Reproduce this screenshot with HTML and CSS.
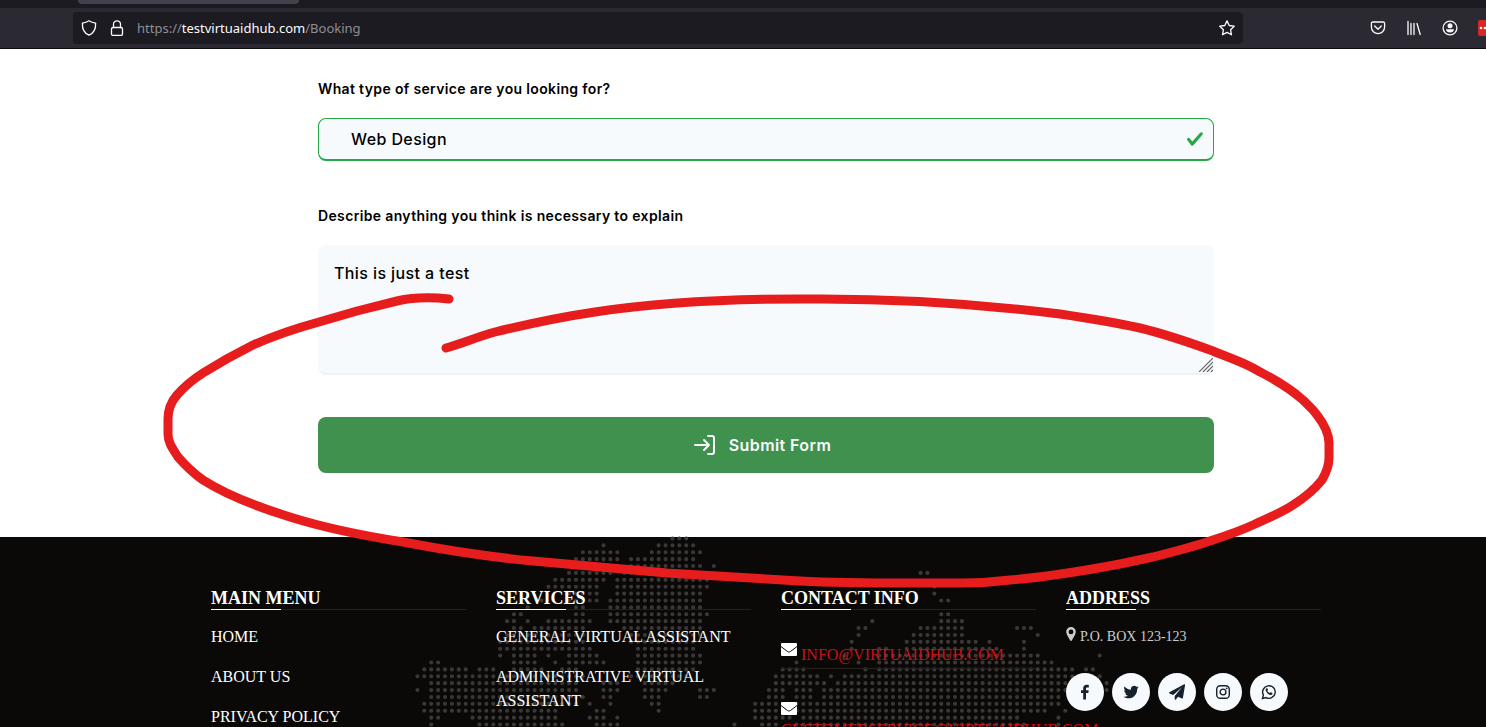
FILE: index.html
```html
<!DOCTYPE html>
<html lang="en">
<head>
<meta charset="utf-8">
<meta name="viewport" content="width=device-width, initial-scale=1">
<title>Booking</title>
<link rel="stylesheet" href="styles.css">
</head>
<body>
<header class="browser">
  <div class="tabstrip"><div class="tab"></div></div>
  <div class="toolbar">
    <div class="urlbar">
      <svg class="icon" viewBox="0 0 16 16" aria-hidden="true"><path d="M8 .8c2 1.300 4 2 6.600 2.400.3 5.600-1.600 9.800-6.600 12-5-2.200-6.900-6.400-6.600-12C4 2.800 6 2.100 8 .8z"/></svg>
      <svg class="icon" viewBox="0 0 16 16" aria-hidden="true"><rect x="2.500" y="7.500" width="11" height="8" rx="1.500"/><path d="M4.500 7.500V4.300a3.500 3.500 0 0 1 7 0v3.200"/></svg>
      <a class="url" href="#">https://<span class="host">testvirtuaidhub.com</span>/Booking</a>
      <button class="tool" type="button" aria-label="Bookmark"><svg class="icon" viewBox="0 0 16 16"><path d="M8 .9l2.200 4.600 5 .7-3.600 3.600.9 5L8 12.400l-4.500 2.400.9-5L.8 6.200l5-.7z"/></svg></button>
    </div>
    <div class="tools">
      <button class="tool" type="button" aria-label="Pocket"><svg class="icon" viewBox="0 0 16 16"><path d="M2.700 2h10.600c.8 0 1.300.5 1.300 1.300V7c0 4-3 6.600-6.600 6.600S1.400 11 1.400 7V3.300C1.400 2.500 1.900 2 2.700 2zM4.700 6L8 9.200 11.300 6"/></svg></button>
      <button class="tool" type="button" aria-label="Library"><svg class="icon" viewBox="0 0 16 16"><path d="M2 1.500v13M5 3.500v11M8 3.500v11M11 3.500l3.200 11"/></svg></button>
      <button class="tool" type="button" aria-label="Account"><svg class="icon" viewBox="0 0 16 16"><circle cx="8" cy="8" r="6.900"/><circle class="solid" cx="8" cy="5.800" r="2.500"/><path class="solid" d="M4 9.300h8c0 2-2 3.300-4 3.300s-4-1.300-4-3.300z"/></svg></button>
      <button class="extension" type="button" aria-label="Extension"><svg viewBox="0 0 16 16"><circle cx="3" cy="8" r="1.300"/><circle cx="7" cy="8" r="1.300"/><circle cx="11" cy="8" r="1.300"/></svg></button>
    </div>
  </div>
</header>

<main>
  <form class="form">
    <label for="service">What type of service are you looking for?</label>
    <div class="select-wrap">
      <select id="service" class="field select"><option>Web Design</option></select>
      <svg class="check" viewBox="0 0 8 8" aria-hidden="true"><path d="M2.300 6.730L.6 4.530c-.4-1.040.46-1.400 1.100-.8l1.100 1.400 3.400-3.800c.6-.63 1.600-.27 1.200.7l-4 4.600c-.43.5-.8.4-1.100.1z"/></svg>
    </div>
    <label for="details">Describe anything you think is necessary to explain</label>
    <div class="area-wrap">
      <textarea id="details" class="field area">This is just a test</textarea>
      <svg class="grip" viewBox="0 0 14 14" aria-hidden="true"><path d="M0 14L14 0M4 14L14 4M8 14l6-6M12 14l2-2"/></svg>
    </div>
    <button class="submit" type="submit">
      <svg viewBox="0 0 24 24" aria-hidden="true"><path d="M2 12h14M11 7l5 5-5 5M15 3h4a2 2 0 0 1 2 2v14a2 2 0 0 1-2 2h-4"/></svg>
      Submit Form
    </button>
  </form>
</main>

<footer class="footer">
  <svg class="map" viewBox="0 0 102 28" aria-hidden="true"><path transform="translate(.5 .5)" d="M37 0h2.100M27 1h.1M35 1h5.100M24 2h5.100M34 2h7.100M23 3h6.100M31 3h9.100M31 4h10.100M43 4h.1M22 5h6.100M30 5h11.100M73 5h1.100M20 6h7.100M29 6h13.100M19 7h7.100M29 7h13.100M75 7h.1M22 8h4.100M29 8h12.100M75 8h.1M18 9h.1M22 9h4.100M28 9h13.100M76 9h1.100M16 10h.1M23 10h1.100M28 10h13.100M14 11h1.100M23 11h1.100M28 11h14.100M76 11h1.100M13 12h1.100M16 12h.1M19 12h6.100M28 12h13.100M66 12h.1M76 12h3.100M14 13h1.100M17 13h7.100M30 13h11.100M64 13h1.100M73 13h6.100M87 13h2.100M13 14h11.100M31 14h10.100M64 14h.1M72 14h7.100M90 14h.1M12 15h12.100M31 15h9.100M63 15h.1M71 15h10.100M83 15h.1M88 15h.1M12 16h13.100M32 16h8.100M63 16h.1M67 16h1.100M71 16h13.100M88 16h.1M12 17h.1M14 17h3.100M19 17h.1M22 17h4.100M32 17h9.100M62 17h.1M67 17h23.100M99 17h.1M2 18h1.100M14 18h3.100M20 18h.1M22 18h5.100M32 18h9.100M55 18h.1M64 18h.1M67 18h25.100M1 19h6.100M9 19h2.100M14 19h4.100M21 19h2.100M32 19h8.100M53 19h3.100M65 19h.1M67 19h28.100M97 19h1.100M0 20h.1M1 20h23.100M31 20h8.100M52 20h6.100M60 20h.1M62 20h35.100M99 20h.1M2 21h21.100M27 21h2.100M33 21h4.100M52 21h7.100M61 21h37.100M100 21h.1M0 22h.1M2 22h21.100M27 22h2.100M33 22h3.100M41 22h2.100M51 22h2.100M55 22h2.100M59 22h39.100M100 22h.1M2 23h22.100M27 23h1.100M33 23h2.100M41 23h1.100M51 23h2.100M55 23h2.100M59 23h34.100M1 24h22.100M25 24h.1M28 24h.1M34 24h1.100M49 24h3.100M54 24h39.100M1 25h19.100M26 25h1.100M35 25h.1M49 25h3.100M54 25h37.100M94 25h.1M2 26h1.100M8 26h12.100M25 26h2.100M29 26h.1M49 26h5.100M56 26h31.100M93 26h.1M2 27h.1M9 27h12.100M26 27h3.100M46 27h.1M50 27h2.100M55 27h33.100M93 27h.1"/></svg>
  <div class="columns">
    <section class="column">
      <h2>MAIN MENU</h2>
      <ul class="links"><li><a href="#">HOME</a></li><li><a href="#">ABOUT US</a></li><li><a href="#">PRIVACY POLICY</a></li></ul>
    </section>
    <section class="column">
      <h2>SERVICES</h2>
      <ul class="links"><li><a href="#">GENERAL VIRTUAL ASSISTANT</a></li><li><a href="#">ADMINISTRATIVE VIRTUAL ASSISTANT</a></li></ul>
    </section>
    <section class="column">
      <h2>CONTACT INFO</h2>
      <ul class="contacts">
        <li><svg class="mail" viewBox="0 0 16 13" aria-hidden="true"><rect width="16" height="13" rx="1"/><path d="M0 3.500l6.500 5c1 .7 2 .7 3 0l6.500-5"/></svg> <a href="#">INFO@VIRTUAIDHUB.COM</a></li>
        <li><svg class="mail" viewBox="0 0 16 13" aria-hidden="true"><rect width="16" height="13" rx="1"/><path d="M0 3.500l6.500 5c1 .7 2 .7 3 0l6.500-5"/></svg> <a href="#">CUSTOMERSERVICE@VIRTUAIDHUB.COM</a></li>
      </ul>
    </section>
    <section class="column">
      <h2>ADDRESS</h2>
      <p class="address"><svg viewBox="0 0 10 14" aria-hidden="true"><path fill-rule="evenodd" d="M5 0a4.800 4.800 0 0 1 4.800 4.900C9.800 7.500 7 11 5.800 13.600c-.3.500-1.300.5-1.600 0C3 11 .2 7.500.2 4.900A4.800 4.800 0 0 1 5 0zm0 2.500a2.400 2.400 0 1 0 0 4.800 2.400 2.400 0 0 0 0-4.800z"/></svg>P.O. BOX 123-123</p>
      <div class="social">
        <a href="#" aria-label="Facebook"><svg viewBox="0 0 16 16"><path d="M11.800 1v2.400h-1.400c-1.100 0-1.400.5-1.400 1.300v1.600h2.700l-.4 2.600H9v6.600H6.200V8.900H4V6.300h2.200V4.400C6.200 2.100 7.600.8 9.700.8c1 0 1.800.1 2.100.2z"/></svg></a>
        <a href="#" aria-label="Twitter"><svg viewBox="0 0 24 24"><path d="M23.600 4.900c-.8.400-1.700.6-2.600.8.900-.6 1.700-1.400 2-2.500-.9.500-1.900.9-2.900 1.100A4.700 4.700 0 0 0 12 8.600C8 8.400 4.700 6.500 2.300 3.600 1 5.800 1.700 8.500 3.700 9.900c-.7 0-1.500-.3-2-.6 0 2.400 1.600 4.200 3.700 4.700-.7.200-1.400.2-2.100.1.600 1.800 2.200 3.200 4.300 3.200A9.400 9.400 0 0 1 .8 19.200C10 25 21.300 19 21.300 7.800v-.6c.9-.7 1.700-1.400 2.300-2.300z"/></svg></a>
        <a href="#" aria-label="Telegram"><svg viewBox="0 0 16 16"><path d="M15.200.3c.4-.3 1 .1.900.6l-2.200 13c-.1.500-.5.700-.9.500l-4-1.700L6.900 15.500c-.5.600-1.200.3-1.200-.4V12L13 3.200 4.200 11l-3.700-1.500c-.6-.3-.6-.9-.1-1.200z"/></svg></a>
        <a href="#" aria-label="Instagram"><svg class="line" viewBox="0 0 16 16"><rect x="1.700" y="1.700" width="12.600" height="12.600" rx="3.600"/><circle cx="8" cy="8" r="2.900"/><circle class="dot" cx="11.700" cy="4.300" r=".9"/></svg></a>
        <a href="#" aria-label="WhatsApp"><svg class="line" viewBox="0 0 16 16"><path d="M1.500 14.500l.9-3.400A6.300 6.300 0 1 1 4.900 13.600z"/><path class="dot" d="M5.400 4.300c.4-.3.900-.2 1.100.2l.5 1.200c.1.500-.5.800-.6 1.200.5 1 1.300 1.800 2.400 2.200.4-.1.700-.9 1.100-.8l1.400.7c.4.300 0 1.300-.4 1.600-1.100.8-2.900.1-4.300-1.200C5.300 8.100 4.200 6.100 4.800 5z"/></svg></a>
      </div>
    </section>
  </div>
</footer>

<svg class="marker" viewBox="0 0 1486 727" aria-hidden="true"><path d="M449 299C430 297 410 298 397 301L357 311L319 322C297 328 278 334 253 345C235 354 219 363 203 373C192 380 184 387 177 395C170 403 168 410 168 419V434C168 443 173 449 178 457C185 465 193 473 203 480C228 496 258 507 290 517C328 529 365 536 403 542C445 550 489 557 533 561L600 567L667 573C711 576 755 578 800 581C855 584 908 583 963 583C980 583 994 582 1010 580C1048 577 1083 571 1120 564L1153 557C1173 552 1193 547 1213 540C1228 535 1240 531 1253 525C1268 518 1281 513 1293 505C1304 498 1314 490 1322 480C1326 473 1329 466 1329 458V443C1329 434 1324 424 1317 415C1313 409 1308 405 1303 400C1284 383 1267 376 1253 368C1240 361 1227 357 1213 351C1191 343 1165 334 1140 328C1113 322 1087 318 1060 314C973 303 887 298 800 299C732 299 662 302 595 312C561 317 528 324 495 332C477 337 463 343 446 348"/></svg>
</body>
</html>
```
FILE: styles.css
```css
* { box-sizing: border-box; }
html { height: 100%; overflow: hidden; }
body {
  margin: 0;
  position: relative;
  min-height: 100%;
  background: #fff;
  color: #000;
  font-family: Inter, "Liberation Sans", sans-serif;
}
button { border: 0; padding: 0; background: none; }
ul { list-style: none; margin: 0; padding: 0; }
a { text-decoration: none; color: inherit; }

.browser { background: #2b2a33; border-bottom: 1px solid #0c0c0d; }
.tabstrip { height: 8px; padding-left: 78px; background: #1c1b22; }
.tab { width: 221px; height: 4px; background: #42414d; border-radius: 0 0 4px 4px; }
.toolbar { display: flex; justify-content: space-between; align-items: center; height: 40px; padding-left: 73px; overflow: hidden; }
.urlbar {
  display: flex;
  align-items: center;
  gap: 12px;
  flex: 0 1 1170px;
  height: 32px;
  padding: 0 8px;
  background: #1c1b22;
  border-radius: 4px;
}
.icon { display: block; flex: none; width: 16px; height: 16px; fill: none; stroke: #fbfbfe; stroke-width: 1.3; stroke-linejoin: round; stroke-linecap: round; }
.icon .solid { fill: #fbfbfe; stroke: none; }
.url { flex: 1; font: 13px "Noto Sans", sans-serif; color: #8f8f98; }
.host { color: #fbfbfe; }
.tools { display: flex; gap: 20px; flex: none; margin-right: -8px; }
.extension { width: 16px; height: 16px; background: #d92626; border-radius: 2px; }
.extension svg { display: block; fill: #fff; }

main { padding-left: 46px; }
.form { width: 896px; max-width: 100%; margin: 0 auto; padding: 31px 0 64px; }
.form label { display: block; font-size: 14px; font-weight: 600; line-height: 17px; letter-spacing: 0.025em; }
.select-wrap, .area-wrap { position: relative; margin: 21px 0 46px; }
.area-wrap { margin-bottom: 42px; }
.field {
  display: block;
  width: 100%;
  border: 0 solid;
  border-radius: 8px;
  background: #f6fafd;
  color: #000;
  font: 500 16px/24px Inter, sans-serif;
  letter-spacing: 0.025em;
}
.select { appearance: none; height: 43px; padding: 0 32px; border-width: 1px 1px 2px; border-color: #28a745; }
.check { position: absolute; right: 10px; top: 12px; width: 18px; height: 18px; fill: #28a745; }
.area { height: 130px; padding: 16px; border-bottom: 2px solid #edf2f7; resize: none; }
.grip { position: absolute; right: 1px; bottom: 3px; width: 14px; height: 14px; fill: none; stroke: #666; stroke-width: 1.2; }
.submit {
  display: flex;
  align-items: center;
  justify-content: center;
  gap: 12px;
  width: 100%;
  height: 56px;
  padding-right: 8px;
  border-radius: 8px;
  background: #3f914d;
  color: #f7fafc;
  font: 600 16px/24px Inter, sans-serif;
  letter-spacing: 0.025em;
}
.submit svg { width: 24px; height: 24px; fill: none; stroke: currentColor; stroke-width: 2; stroke-linecap: round; stroke-linejoin: round; }

.footer { position: relative; min-height: 190px; padding: 50px 150px 0 196px; background: #0a0907; color: #fff; font-family: "Liberation Serif", serif; }
.map { position: absolute; left: 414px; top: -2px; width: 703px; height: 193px; fill: none; stroke: #393837; stroke-width: .6; stroke-linecap: round; stroke-dasharray: 0 1; }
.columns { position: relative; display: grid; grid-template-columns: repeat(4, 1fr); height: 140px; }
.column { min-width: 0; padding: 0 15px; }
.column h2 { position: relative; margin: 0 0 15px; border-bottom: 1px solid #232221; font-size: 18px; line-height: 22px; font-weight: 700; }
.column h2::after { content: ""; position: absolute; left: 0; bottom: -1px; width: 70px; height: 1px; background: #fff; }
.links { font-size: 16px; line-height: 24px; }
.links li { margin-bottom: 16px; }
.contacts { font-size: 16px; line-height: 16px; }
.contacts li { min-height: 44px; margin-top: 15px; padding-top: 22px; border-bottom: 1px solid #232221; }
.contacts a { color: #cc1016; }
.mail { width: 16px; height: 13px; margin: -8px 0 0; vertical-align: 4px; }
.mail rect { fill: #fff; }
.mail path { fill: none; stroke: #0a0907; }
.address { display: flex; gap: 4px; margin: 0; color: #ccc; font-size: 14px; line-height: 24px; }
.address svg { width: 10px; height: 14px; margin-top: 2px; fill: #ccc; }
.social { display: flex; gap: 8px; margin-top: 24px; }
.social a { display: grid; place-items: center; width: 38px; height: 38px; border-radius: 50%; background: #f6fafd; }
.social svg { width: 16px; height: 16px; fill: #18202d; }
.social .line { fill: none; stroke: #18202d; stroke-width: 1.4; }
.social .dot { fill: #18202d; stroke: none; }

.marker { position: absolute; left: 0; top: 0; width: 100%; pointer-events: none; fill: none; stroke: #e71d1d; stroke-width: 9; stroke-linecap: round; stroke-linejoin: round; }
```
